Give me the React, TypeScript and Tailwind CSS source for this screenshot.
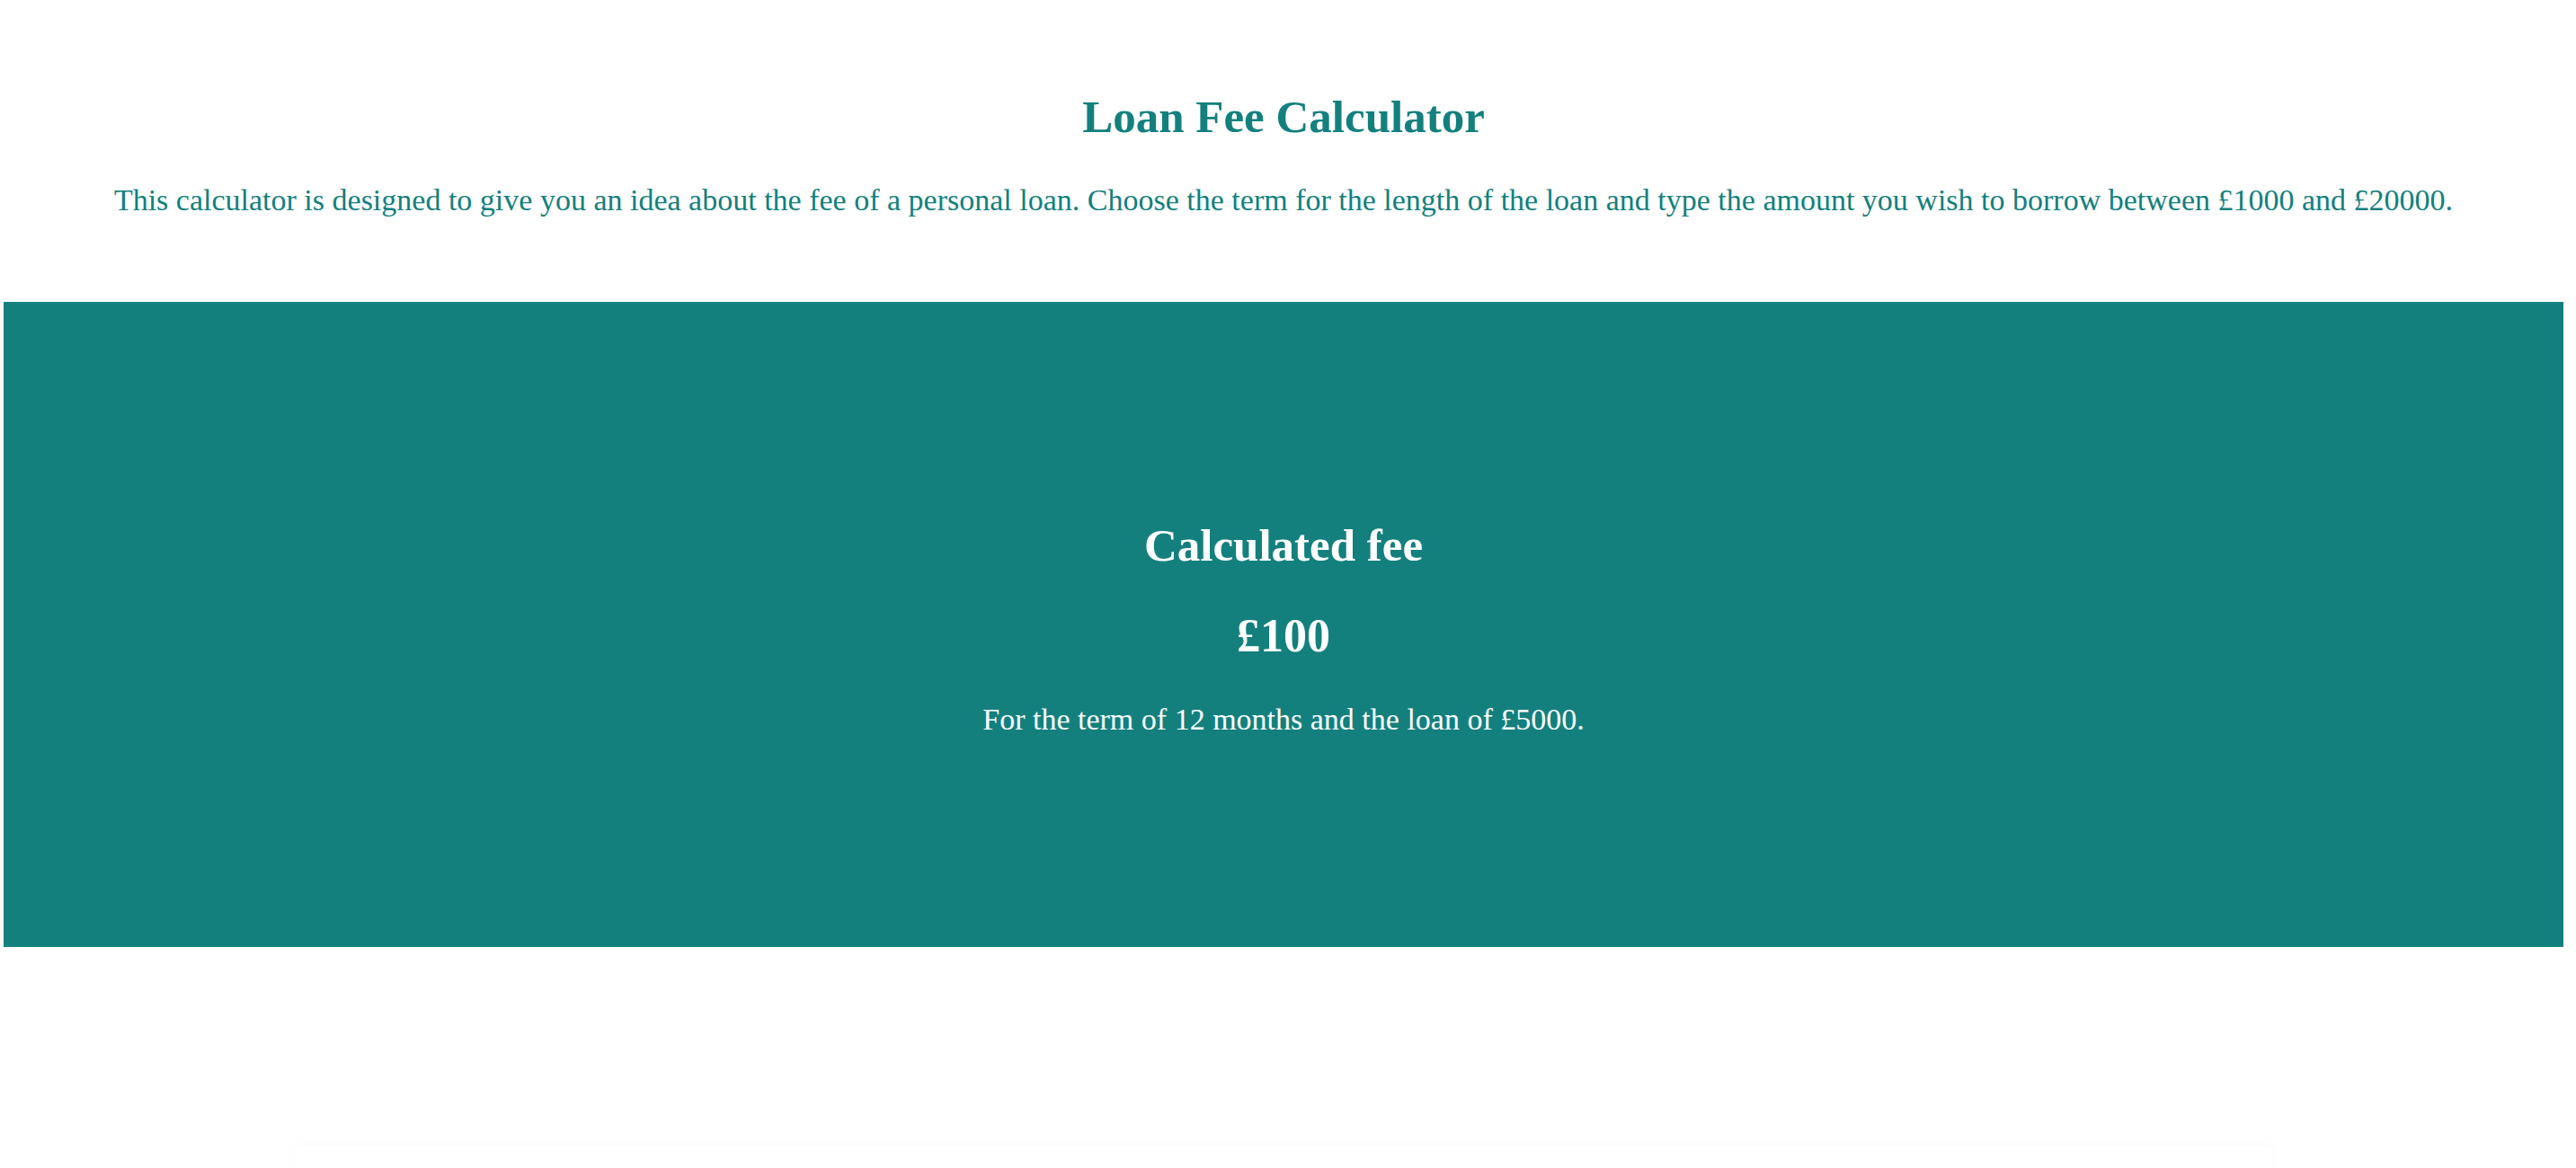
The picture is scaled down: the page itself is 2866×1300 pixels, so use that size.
import React from "react";

const App = () => {
  return (
    <div className="w-[2848px] ml-[4px] bg-white font-['Liberation_Serif',serif] text-center">
      <h1 className="pt-[100px] text-[51px] leading-[60px] font-bold text-[#13807e]">
        Loan Fee Calculator
      </h1>
      <p className="mt-[43px] text-[34px] leading-[40px] text-[#13807e]">
        This calculator is designed to give you an idea about the fee of a personal loan. Choose the
        term for the length of the loan and type the amount you wish to borrow between £1000 and
        £20000.
      </p>

      <div className="mt-[93px] h-[718px] bg-[#13807e] text-white flex flex-col items-center pt-[241px]">
        <h2 className="text-[51px] leading-[60px] font-bold">Calculated fee</h2>
        <div className="mt-[41px] text-[52px] leading-[60px] font-bold">£100</div>
        <p className="mt-[43px] text-[34px] leading-[40px]">
          For the term of 12 months and the loan of £5000.
        </p>
      </div>

      <div className="mt-[221px] mx-[325px] h-[300px] rounded-md bg-white shadow-[0_-2px_20px_rgba(0,0,0,0.025)]"></div>
    </div>
  );
};

export default App;
